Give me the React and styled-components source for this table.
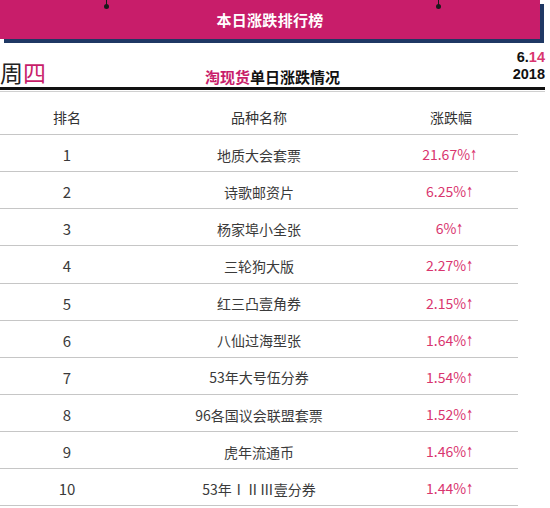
import React from "react";
import styled, { createGlobalStyle } from "styled-components";

const Global = createGlobalStyle`
  html, body { margin: 0; padding: 0; background: #fff; }
  body { font-family: "Noto Sans CJK SC", "Noto Sans", sans-serif; width: 550px; overflow: hidden; }
`;

const PINK = "#c81d6a";
const TEXT_PINK = "#d9356f";

const Page = styled.div`
  width: 550px;
  height: 508px;
  overflow: hidden;
`;

const BannerWrap = styled.div`
  position: relative;
  width: 540px;
  height: 39px;
  margin-bottom: 4px;
`;

const Banner = styled.div`
  height: 39px;
  background: ${PINK};
  box-shadow: 4px 4px 0 0 #1f3864;
  display: flex;
  align-items: center;
  justify-content: center;
  color: #fff;
  font-size: 15px;
  font-weight: 700;
  letter-spacing: 0.3px;
`;

const Pin = styled.span`
  position: absolute;
  top: 0;
  left: ${(p) => p.$x}px;
  width: 1px;
  height: 6px;
  background: #1a1a1a;
  &::after {
    content: "";
    position: absolute;
    left: -2px;
    bottom: -3px;
    width: 5px;
    height: 5px;
    border-radius: 50%;
    background: #1a1a1a;
  }
`;

const Head = styled.div`
  width: 545px;
  height: 44px;
  display: grid;
  grid-template-columns: 1fr auto 1fr;
  align-items: end;
  border-bottom: 3px solid #111;
  box-shadow: 0 1px 0 0 #fff, 0 2px 0 0 #d0d0d0;
`;

const Week = styled.div`
  font-size: 23px;
  line-height: 1;
  color: #222;
  padding-bottom: 3px;
`;

const Hi = styled.span`
  color: ${(p) => p.$c || TEXT_PINK};
`;

const Title = styled.div`
  font-size: 15px;
  font-weight: 700;
  color: #111;
  line-height: 1;
  padding-bottom: 3px;
`;

const DateBox = styled.div`
  justify-self: end;
  display: flex;
  flex-direction: column;
  align-items: flex-end;
  font-family: "Liberation Sans", Arial, sans-serif;
  font-weight: 700;
  font-size: 14.5px;
  color: #111;
  padding-bottom: 4px;
`;

const DateLine = styled.div`
  line-height: 17px;
  height: 17px;
`;

const Table = styled.div`
  width: 518px;
  margin-top: 9px;
`;

const Row = styled.div`
  display: grid;
  grid-template-columns: 134px 250px 134px;
  height: ${(p) => (p.$head ? 35 : 36.15)}px;
  border-bottom: 1px solid #c6c6c6;
  align-items: center;
  text-align: center;
  font-size: 14px;
  color: ${(p) => (p.$head ? "#333" : "#3a3a3a")};
`;

const Cell = styled.div`
  line-height: 1;
  font-size: ${(p) => (p.$num ? 15 : 14)}px;
  color: ${(p) => (p.$pct ? TEXT_PINK : "inherit")};
  padding-top: ${(p) => (p.$head ? 0 : 3)}px;
`;

const Arrow = styled.span`
  display: inline-block;
  font-family: "DejaVu Sans", sans-serif;
  font-size: 14px;
  transform: scaleX(0.6);
  margin-left: -2px;
`;

const rows = [
  ["1", "地质大会套票", "21.67%"],
  ["2", "诗歌邮资片", "6.25%"],
  ["3", "杨家埠小全张", "6%"],
  ["4", "三轮狗大版", "2.27%"],
  ["5", "红三凸壹角券", "2.15%"],
  ["6", "八仙过海型张", "1.64%"],
  ["7", "53年大号伍分券", "1.54%"],
  ["8", "96各国议会联盟套票", "1.52%"],
  ["9", "虎年流通币", "1.46%"],
  ["10", "53年ⅠⅡⅢ壹分券", "1.44%"],
];

export default function App() {
  return (
    <Page>
      <Global />
      <BannerWrap>
        <Banner>本日涨跌排行榜</Banner>
        <Pin $x={106} />
        <Pin $x={438} />
      </BannerWrap>
      <Head>
        <Week>
          周<Hi $c={PINK}>四</Hi>
        </Week>
        <Title>
          <Hi $c={PINK}>淘现货</Hi>单日涨跌情况
        </Title>
        <DateBox>
          <DateLine>
            6.<Hi>14</Hi>
          </DateLine>
          <DateLine>2018</DateLine>
        </DateBox>
      </Head>
      <Table>
        <Row $head>
          <Cell $head>排名</Cell>
          <Cell $head>品种名称</Cell>
          <Cell $head>涨跌幅</Cell>
        </Row>
        {rows.map(([n, name, pct]) => (
          <Row key={n}>
            <Cell $num>{n}</Cell>
            <Cell>{name}</Cell>
            <Cell $pct>
              {pct}
              <Arrow>↑</Arrow>
            </Cell>
          </Row>
        ))}
      </Table>
    </Page>
  );
}
